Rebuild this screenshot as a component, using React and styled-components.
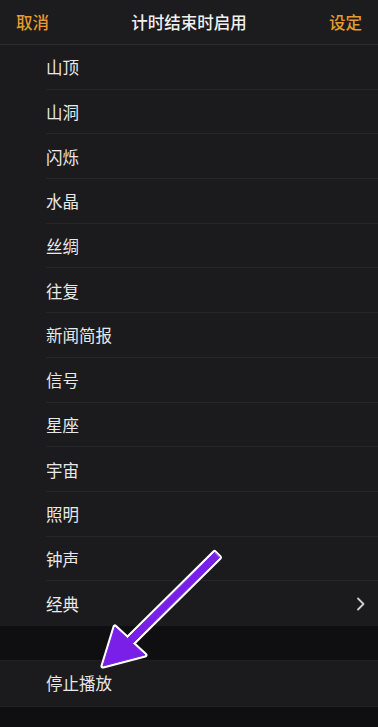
import React from "react";
import styled, { createGlobalStyle } from "styled-components";

const Global = createGlobalStyle`
  html, body { margin: 0; padding: 0; background: #0f0e10; }
  body { font-family: "Noto Sans CJK SC", "Noto Sans", sans-serif; }
`;

const Page = styled.div`
  position: relative;
  width: 378px;
  height: 727px;
  background: #0f0e10;
  overflow: hidden;
  display: flex;
  flex-direction: column;
`;

const Header = styled.div`
  height: 44px;
  flex: none;
  display: flex;
  align-items: center;
  justify-content: space-between;
  padding: 0 16px 0 16px;
  background: #1c1b1e;
  border-bottom: 1px solid #2c2b2e;
`;

const HeaderBtn = styled.span`
  color: #e69a2e;
  font-size: 16.5px;
  font-weight: 500;
`;

const Title = styled.span`
  color: #f0f0f0;
  font-size: 16.5px;
  font-weight: 500;
`;

const Group = styled.div`
  background: #1b1a1d;
  display: flex;
  flex-direction: column;
`;

const Row = styled.div`
  height: 44.7px;
  box-sizing: border-box;
  display: flex;
  align-items: center;
  justify-content: space-between;
  padding: 0 12px 0 46px;
  position: relative;
  color: #e8e8e8;
  font-size: 16.5px;
  &::after {
    content: "";
    display: ${(p) => (p.$last ? "none" : "block")};
    position: absolute;
    left: 46px;
    right: 0;
    bottom: 0;
    height: 1px;
    background: #262528;
  }
`;

const Gap = styled.div`
  height: 34px;
  flex: none;
  background: #0f0e10;
  border-bottom: 1px solid #201f22;
`;

const StopRow = styled(Row)`
  height: 45px;
`;

const StopGroup = styled(Group)`
  border-bottom: 1px solid #1f1e21;
`;

const Arrow = styled.svg`
  position: absolute;
  left: 0;
  top: 0;
  pointer-events: none;
`;

const items = [
  "山顶", "山洞", "闪烁", "水晶", "丝绸", "往复", "新闻简报",
  "信号", "星座", "宇宙", "照明", "钟声", "经典",
];

const arrowPath =
  "M214.5 552.5 L127.5 638.5 L115 627 L103 666 L145 655 L132.5 643.5 L219.5 557.5 Z";

export default function App() {
  return (
    <>
      <Global />
      <Page>
        <Header>
          <HeaderBtn>取消</HeaderBtn>
          <Title>计时结束时启用</Title>
          <HeaderBtn>设定</HeaderBtn>
        </Header>
        <Group>
          {items.map((t, i) => (
            <Row key={t} $last={i === items.length - 1}>
              <span>{t}</span>
              {i === items.length - 1 && (
                <svg width="10" height="14" viewBox="0 0 10 14">
                  <path d="M2 1.5 L7.5 7 L2 12.5" fill="none" stroke="#cfcfcf" strokeWidth="1.8" strokeLinecap="round" strokeLinejoin="round" />
                </svg>
              )}
            </Row>
          ))}
        </Group>
        <Gap />
        <StopGroup>
          <StopRow $last>
            <span>停止播放</span>
          </StopRow>
        </StopGroup>
        <Arrow width="378" height="727" viewBox="0 0 378 727">
          <g strokeLinejoin="round" strokeLinecap="round">
            <path d={arrowPath} fill="#ffffff" stroke="#ffffff" strokeWidth="5" />
            <path d={arrowPath} fill="#7a1fe8" stroke="#7a1fe8" strokeWidth="1" />
          </g>
        </Arrow>
      </Page>
    </>
  );
}
